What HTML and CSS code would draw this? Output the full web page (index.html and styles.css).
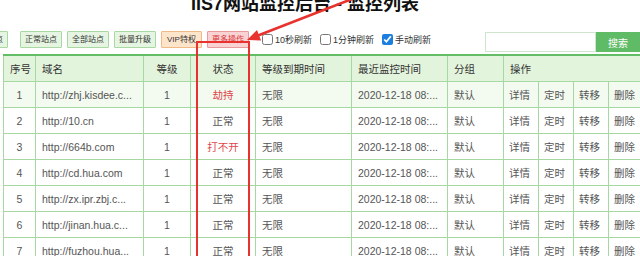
FILE: index.html
```html
<!DOCTYPE html>
<html lang="zh-CN">
<head>
    <meta charset="UTF-8">
    <meta name="viewport" content="width=device-width, initial-scale=1.0">
    <title>IIS7网站监控后台 - 监控列表</title>
    <link rel="stylesheet" href="styles.css">
</head>
<body>
    <div class="page">
        <h1 class="title">IIS7网站监控后台 - 监控列表</h1>

        <!-- Toolbar: filters, refresh options and search -->
        <div class="toolbar">
            <button class="btn btn-first">异常站点</button>
            <button class="btn">正常站点</button>
            <button class="btn">全部站点</button>
            <button class="btn">批量升级</button>
            <button class="btn btn-vip">VIP特权</button>
            <button class="btn btn-more">更多操作</button>
            <label class="refresh refresh-first"><input type="checkbox">10秒刷新</label>
            <label class="refresh"><input type="checkbox">1分钟刷新</label>
            <label class="refresh"><input type="checkbox" checked>手动刷新</label>
            <div class="search">
                <input type="text" class="search-input">
                <button class="search-btn">搜索</button>
            </div>
        </div>

        <!-- Site list -->
        <table class="sites">
            <colgroup>
                <col class="w-no">
                <col class="w-domain">
                <col class="w-level">
                <col class="w-status">
                <col class="w-time">
                <col class="w-time">
                <col class="w-group">
                <col class="w-op">
                <col class="w-op">
                <col class="w-op">
                <col class="w-op-last">
            </colgroup>
            <thead>
                <tr>
                    <th class="center">序号</th>
                    <th>域名</th>
                    <th class="center">等级</th>
                    <th class="center">状态</th>
                    <th>等级到期时间</th>
                    <th>最近监控时间</th>
                    <th>分组</th>
                    <th colspan="4">操作</th>
                </tr>
            </thead>
            <tbody>
                <tr class="active">
                    <td class="center">1</td>
                    <td>http://zhj.kisdee.c...</td>
                    <td class="center">1</td>
                    <td class="center bad">劫持</td>
                    <td>无限</td>
                    <td>2020-12-18 08:...</td>
                    <td>默认</td>
                    <td class="op">详情</td><td class="op">定时</td><td class="op">转移</td><td class="op">删除</td>
                </tr>
                <tr>
                    <td class="center">2</td>
                    <td>http://10.cn</td>
                    <td class="center">1</td>
                    <td class="center">正常</td>
                    <td>无限</td>
                    <td>2020-12-18 08:...</td>
                    <td>默认</td>
                    <td class="op">详情</td><td class="op">定时</td><td class="op">转移</td><td class="op">删除</td>
                </tr>
                <tr>
                    <td class="center">3</td>
                    <td>http://664b.com</td>
                    <td class="center">1</td>
                    <td class="center bad">打不开</td>
                    <td>无限</td>
                    <td>2020-12-18 08:...</td>
                    <td>默认</td>
                    <td class="op">详情</td><td class="op">定时</td><td class="op">转移</td><td class="op">删除</td>
                </tr>
                <tr>
                    <td class="center">4</td>
                    <td>http://cd.hua.com</td>
                    <td class="center">1</td>
                    <td class="center">正常</td>
                    <td>无限</td>
                    <td>2020-12-18 08:...</td>
                    <td>默认</td>
                    <td class="op">详情</td><td class="op">定时</td><td class="op">转移</td><td class="op">删除</td>
                </tr>
                <tr>
                    <td class="center">5</td>
                    <td>http://zx.ipr.zbj.c...</td>
                    <td class="center">1</td>
                    <td class="center">正常</td>
                    <td>无限</td>
                    <td>2020-12-18 08:...</td>
                    <td>默认</td>
                    <td class="op">详情</td><td class="op">定时</td><td class="op">转移</td><td class="op">删除</td>
                </tr>
                <tr>
                    <td class="center">6</td>
                    <td>http://jinan.hua.c...</td>
                    <td class="center">1</td>
                    <td class="center">正常</td>
                    <td>无限</td>
                    <td>2020-12-18 08:...</td>
                    <td>默认</td>
                    <td class="op">详情</td><td class="op">定时</td><td class="op">转移</td><td class="op">删除</td>
                </tr>
                <tr>
                    <td class="center">7</td>
                    <td>http://fuzhou.hua...</td>
                    <td class="center">1</td>
                    <td class="center">正常</td>
                    <td>无限</td>
                    <td>2020-12-18 08:...</td>
                    <td>默认</td>
                    <td class="op">详情</td><td class="op">定时</td><td class="op">转移</td><td class="op">删除</td>
                </tr>
            </tbody>
        </table>

        <!-- Red annotation drawn over the page -->
        <div class="mark-box"></div>
        <svg class="mark-arrow" width="640" height="60" viewBox="0 0 640 60">
            <line x1="258" y1="35.5" x2="370" y2="-8" stroke="#e8322e" stroke-width="2.6"/>
            <polygon points="247,40 261,40.5 257,30" fill="#e8322e"/>
        </svg>
    </div>
</body>
</html>
```

FILE: styles.css
```css
body {
    margin: 0;
    padding: 0;
    background-color: #fff;
    color: #555;
    font-family: "Liberation Sans", "Noto Sans CJK SC", sans-serif;
    overflow: hidden;
}

.page {
    position: relative;
    width: 640px;
    height: 256px;
    overflow: hidden;
}

.title {
    width: 610px;
    margin: -6px 0 0;
    text-align: center;
    font-size: 18px;
    line-height: 20px;
    font-weight: bold;
    color: #111;
}

/* Toolbar */
.toolbar {
    display: flex;
    align-items: flex-start;
    gap: 5px;
    width: 674px;
    height: 23px;
    margin: 17px 0 0 -34px;
}

.btn {
    height: 17px;
    padding: 0 4px;
    font-family: inherit;
    font-size: 8px;
    line-height: 15px;
    color: #333;
    background-color: #e6f5e1;
    border: 1px solid #a9d9a3;
    border-radius: 1px;
    cursor: pointer;
}

.btn-first {
    margin-right: 7px;
}

.btn-vip {
    padding: 0 5px;
    background-color: #fde5cb;
    border-color: #f1b986;
}

.btn-more {
    background-color: #f9d3d3;
    border-color: #e99a9a;
    color: #d9363a;
}

.refresh {
    display: flex;
    align-items: center;
    height: 17px;
    margin-left: 3px;
    font-size: 9px;
    color: #333;
}

.refresh-first {
    margin-left: 8px;
}

.refresh input {
    width: 11px;
    height: 11px;
    margin: 0 2px 0 0;
    accent-color: #1c7fe0;
}

.search {
    display: flex;
    margin: 1px 0 0 auto;
}

.search-input {
    width: 111px;
    height: 20px;
    box-sizing: border-box;
    border: 1px solid #cfe5cd;
    outline: none;
}

.search-btn {
    width: 44px;
    height: 20px;
    border: none;
    background-color: #5fbb66;
    color: #fff;
    font-family: inherit;
    font-size: 10px;
}

/* Table */
.sites {
    width: 644px;
    margin-left: 3px;
    table-layout: fixed;
    border-collapse: collapse;
    font-size: 10.5px;
    border-top: 2px solid #62bd66;
}

.w-no { width: 32px; }
.w-domain { width: 108px; }
.w-level { width: 47px; }
.w-status { width: 65px; }
.w-time { width: 96px; }
.w-group { width: 56px; }
.w-op { width: 35px; }
.w-op-last { width: 40px; }

th, td {
    height: 25px;
    padding: 0 6px;
    text-align: left;
    white-space: nowrap;
    overflow: hidden;
    border: 1px solid #a6d8a1;
}

th {
    background-color: #e3f4dd;
    color: #333;
    font-weight: normal;
}

.sites tr.active td {
    background-color: #f3faf0;
}

.center {
    text-align: center;
}

td.op {
    padding: 0 5px;
}

.bad {
    color: #e0454b;
}

/* Annotation overlay */
.mark-box {
    position: absolute;
    left: 196px;
    top: 41px;
    width: 50px;
    height: 240px;
    border: 2px solid #e8322e;
}

.mark-arrow {
    position: absolute;
    left: 0;
    top: 0;
}
```
